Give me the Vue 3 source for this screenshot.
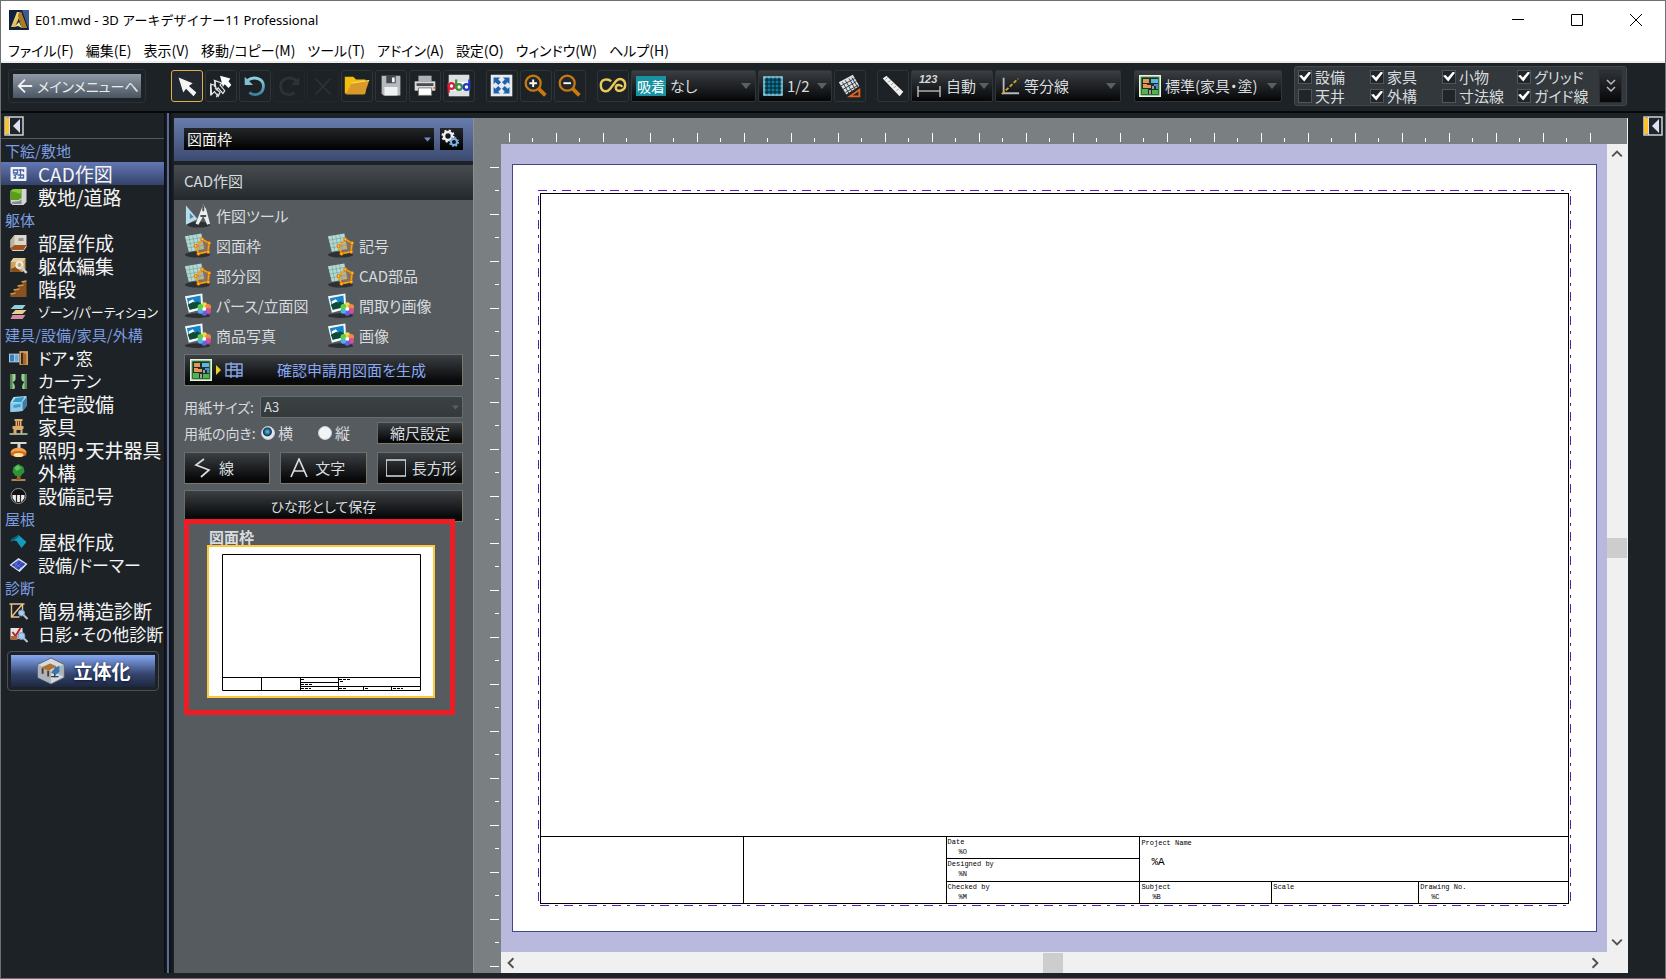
<script setup>
import { ref } from 'vue'

const menus = ['ファイル(F)', '編集(E)', '表示(V)', '移動/コピー(M)', 'ツール(T)', 'アドイン(A)', '設定(O)', 'ウィンドウ(W)', 'ヘルプ(H)']

const editTools = [
  { icon: 't-arrow', label: '選択', active: true },
  { icon: 't-multi', label: '複数選択' },
  { icon: 't-undo', label: '元に戻す' },
  { icon: 't-redo', label: 'やり直し', off: true },
  { icon: 't-delete', label: '削除', off: true },
  { icon: 't-open', label: '開く' },
  { icon: 't-save', label: '保存' },
  { icon: 't-print', label: '印刷' },
  { icon: 't-pbd', label: 'パース' }
]
const viewTools = [
  { icon: 't-fit', label: '全体表示' },
  { icon: 't-zoomin', label: '拡大' },
  { icon: 't-zoomout', label: '縮小' }
]

const layers = ref([
  { name: '設備', on: true }, { name: '家具', on: true }, { name: '小物', on: true }, { name: 'グリッド', on: true },
  { name: '天井', on: false }, { name: '外構', on: true }, { name: '寸法線', on: false }, { name: 'ガイド線', on: true }
])

const groups = [
  { title: '下絵/敷地', items: [['CAD作図', 's-cad'], ['敷地/道路', 's-land']] },
  { title: '躯体', items: [['部屋作成', 's-room'], ['躯体編集', 's-edit'], ['階段', 's-stairs'], ['ゾーン/パーティション', 's-zone', 'small']] },
  { title: '建具/設備/家具/外構', items: [['ドア・窓', 's-door', 'kana'], ['カーテン', 's-curtain', 'kana'], ['住宅設備', 's-bath'], ['家具', 's-chair'], ['照明・天井器具', 's-lamp'], ['外構', 's-tree'], ['設備記号', 's-symbol']] },
  { title: '屋根', items: [['屋根作成', 's-roof'], ['設備/ドーマー', 's-solar', 'kana']] },
  { title: '診断', items: [['簡易構造診断', 's-struct'], ['日影・その他診断', 's-sun', 'kana']] }
]
const current = ref('CAD作図')

const parts = [
  ['作図ツール', 'p-compass'], null,
  ['図面枠', 'p-shape'], ['記号', 'p-shape'],
  ['部分図', 'p-shape'], ['CAD部品', 'p-shape'],
  ['パース/立面図', 'p-image'], ['間取り画像', 'p-image'],
  ['商品写真', 'p-image'], ['画像', 'p-image']
]

const direction = ref('横')
const blockCells = [
  { area: 'a' }, { area: 'b' },
  { area: 'c', label: 'Date', value: '%O' },
  { area: 'd', label: 'Designed by', value: '%N' },
  { area: 'e', label: 'Checked by', value: '%M' },
  { area: 'f', label: 'Project Name', value: '%A', big: true },
  { area: 'g', label: 'Subject', value: '%B' },
  { area: 'h', label: 'Scale' },
  { area: 'i', label: 'Drawing No.', value: '%C' }
]
</script>

<template>
  <div class="window">
    <svg class="defs" aria-hidden="true">
      <defs>
        <linearGradient id="g-gold" x1="0" y1="0" x2="1" y2="1"><stop offset="0" stop-color="#fff0a0" /><stop offset="1" stop-color="#c98a10" /></linearGradient>
        <linearGradient id="g-cyan" x1="0" y1="0" x2="0" y2="1"><stop offset="0" stop-color="#8fd0e0" /><stop offset="1" stop-color="#3d7f9c" /></linearGradient>
      </defs>
      <symbol id="logo" viewBox="0 0 20 20">
        <rect width="20" height="20" fill="#10213f" /><path d="M13 0h7v20z" fill="#3f5c8c" />
        <path d="M8 2h4l6 16h-5L10 8 6 17H2z" fill="url(#g-gold)" /><path d="M10 2h2l6 16h-5L9 6z" fill="#a97c1c" /><path d="M5 17l5-5 3 6-4-2z" fill="#f6df8c" />
      </symbol>
      <symbol id="t-arrow" viewBox="0 0 32 32"><path d="M7 7l15 6-4 3 8 7-3 4-8-8-3 4z" fill="#f4f4f4" /></symbol>
      <symbol id="t-multi" viewBox="0 0 32 32">
        <g fill="#1c2024" stroke="#e4e4e4" stroke-width="1.3"><path d="M5 14l7 2-2 2 5 5-2 4-4-5-3 3z" /><path d="M9 10l8 3-2 2 5 6-2 3-5-6-2 2z" /></g>
        <path d="M15 5l11 3-2 3 3 4-3 3-4-4-2 3z" fill="#fff" /><path d="M5 15v11M10 11l-1 6M13 24l-2 4" stroke="#e4e4e4" stroke-width="1.4" fill="none" />
      </symbol>
      <symbol id="t-undo" viewBox="0 0 32 32"><path d="M8 10c7-5 17-2 17 6s-8 12-15 7" fill="none" stroke="url(#g-cyan)" stroke-width="3" /><path d="M5 6v9h9z" fill="#7cc0d4" /></symbol>
      <symbol id="t-redo" viewBox="0 0 32 32"><path d="M24 10c-7-5-17-2-17 6s8 12 15 7" fill="none" stroke="#2c3236" stroke-width="3" /><path d="M27 6v9h-9z" fill="#2c3236" /></symbol>
      <symbol id="t-delete" viewBox="0 0 32 32"><path d="M8 8l16 17M24 8L8 25" stroke="#2b3034" stroke-width="2" /></symbol>
      <symbol id="t-open" viewBox="0 0 32 32"><path d="M3 6h9l3 3h10v15H3z" fill="#f3bd0c" /><path d="M10 13l19-3-5 15H4z" fill="#d99a2a" /><path d="M10 13l19-3" stroke="#ffe07a" /></symbol>
      <symbol id="t-save" viewBox="0 0 32 32"><path d="M6 5h20v21H8l-2-2z" fill="#b6babf" /><path d="M11 5h10v8H11z" fill="#41474d" /><path d="M17 7h3v5h-3zM9 17h14v9H9z" fill="#eef0f2" /></symbol>
      <symbol id="t-print" viewBox="0 0 32 32"><path d="M9 5h14v6H9z" fill="#aeb2b6" /><path d="M5 11h22v10H5z" fill="#d9dadb" /><path d="M7 13h18v3H7z" fill="#4a4d50" /><path d="M9 18h14v8H9z" fill="#fff" stroke="#777" /><path d="M25 17h2v2h-2z" fill="#e66f29" /></symbol>
      <symbol id="t-pbd" viewBox="0 0 32 32">
        <rect x="5" y="4" width="22" height="23" fill="#dde0e3" /><rect x="5" y="12" width="22" height="9" fill="#fff" />
        <g fill="none" stroke-width="2.4"><circle cx="8" cy="16" r="3" stroke="#d4213a" /><path d="M5 13v10" stroke="#d4213a" /><circle cx="16" cy="17" r="3" stroke="#3a8f3c" /><path d="M13 9v10" stroke="#3a8f3c" /><circle cx="24" cy="17" r="3" stroke="#2438c0" /><path d="M27 9v10" stroke="#2438c0" /></g>
      </symbol>
      <symbol id="t-fit" viewBox="0 0 32 32"><rect x="4" y="4" width="23" height="23" fill="#e6ebf2" /><path d="M7 7h7l-2 2 3 3-3 3-3-3-2 2zM24 7h-7l2 2-3 3 3 3 3-3 2 2zM7 24h7l-2-2 3-3-3-3-3 3-2-2zM24 24h-7l2-2-3-3 3-3 3 3 2-2z" fill="#2262a8" /></symbol>
      <symbol id="t-zoomin" viewBox="0 0 32 32"><circle cx="13" cy="13" r="8" fill="#24282c" stroke="#c87a10" stroke-width="2.4" /><path d="M19 19l7 7" stroke="#c87a10" stroke-width="4" /><path d="M13 9v8M9 13h8" stroke="#fff" stroke-width="2" /></symbol>
      <symbol id="t-zoomout" viewBox="0 0 32 32"><circle cx="13" cy="13" r="8" fill="#24282c" stroke="#c87a10" stroke-width="2.4" /><path d="M19 19l7 7" stroke="#c87a10" stroke-width="4" /><path d="M9 13h8" stroke="#fff" stroke-width="2" /></symbol>
      <symbol id="t-loop" viewBox="0 0 32 32"><path d="M14 11C11 8 3 8 3 15c0 8 7 8 10 4l6-8c4-5 10-2 10 4 0 7-10 8-10 3 0-4 5-4 7-1" fill="none" stroke="#e8c95c" stroke-width="2.6" /></symbol>
      <symbol id="t-grid" viewBox="0 0 20 20"><rect width="20" height="20" fill="#0b7c9c" /><path d="M4 0v20M8 0v20M12 0v20M16 0v20M0 4h20M0 8h20M0 12h20M0 16h20" stroke="#0b1c24" /><rect x="1" y="1" width="18" height="18" fill="none" stroke="#d6f0f6" /></symbol>
      <symbol id="t-gridrot" viewBox="0 0 32 32"><path d="M4 12L19 4l7 12-14 9z" fill="#dde0e2" /><path d="M8 12l7 12M11 10l7 12M15 8l7 12M18 7l6 10M6 16l15-8M8 20l15-9M11 23l14-8" stroke="#30363a" stroke-width="1" /><path d="M26 20v7H16z" fill="none" stroke="#e0641c" stroke-width="2" /></symbol>
      <symbol id="t-ruler" viewBox="0 0 32 32"><path d="M5 8l4-3 18 17-4 5z" fill="#eeeeec" /><path d="M10 7l-2 2M13 10l-2 2M16 13l-2 2M19 16l-2 2M22 19l-2 2" stroke="#888" /></symbol>
      <symbol id="t-divide" viewBox="0 0 20 22"><path d="M3 2v17h17" fill="none" stroke="#b5b9bc" stroke-width="2" /><path d="M1 20L19 3" stroke="#d6a92c" stroke-width="2" stroke-dasharray="4 2" /></symbol>
      <symbol id="t-plan" viewBox="0 0 22 22"><rect width="22" height="22" fill="#eaf3e6" /><rect x="2" y="2" width="18" height="18" fill="#1c3224" stroke="#4aa653" /><path d="M4 4h6v4H4zM4 9h4v4H4zM8 10h4v3H8z" fill="#eb935c" /><path d="M12 4h7v4h-7z" fill="#61b3e8" /><path d="M15 9h4v5h-2v-3h-2z" fill="#4a8ed0" /><path d="M3 14h6v5H3zM13 15h6v4h-6z" fill="#57b050" /><path d="M13 11h2v3h-2zM10 15h2v4h-2z" fill="#98a0a0" /></symbol>
      <symbol id="t-grids" viewBox="0 0 18 18"><path d="M1 3h16v12H1zM1 9h16M6 1v16M12 3v14M6 6h6M12 12h5" fill="none" stroke="#8aaaf0" stroke-width="1.3" /></symbol>
      <symbol id="collapse" viewBox="0 0 20 20"><rect x="1" y="1" width="18" height="18" fill="#20252b" stroke="#dadfe0" stroke-width="1.4" /><rect x="1" y="2" width="4" height="16" fill="#fcc42c" /><path d="M5.500 1v18" stroke="#dadfe0" /><path d="M16 3v14l-7-7z" fill="#e0e0f4" /></symbol>
      <symbol id="down" viewBox="0 0 10 6"><path d="M0 0h10L5 6z" fill="currentColor" /></symbol>
      <symbol id="s-cad" viewBox="0 0 18 18"><rect x="1" y="2" width="16" height="14" rx="1" fill="#f2f4fa" /><path d="M4 5h4v3H4zM4 10h2v3H4M9 5h5v2M11 4v9M8 10h6v3H9M7 8v2" fill="none" stroke="#4b68a8" stroke-width="1.3" /></symbol>
      <symbol id="s-land" viewBox="0 0 18 18"><path d="M1 3l3-2h13v13l-3 3H3l-2-2z" fill="#d2d5d3" /><path d="M1 3l3-2h8v9l-3 2H1z" fill="#5a9c1c" /><path d="M1 3l3-2h8v5z" fill="#83c43a" /><path d="M2 14l8-1 2-2v5H3z" fill="#868a88" /></symbol>
      <symbol id="s-room" viewBox="0 0 18 18"><path d="M1 6l4-5h12v12l-3 4H3l-2-3z" fill="#dfd8c8" /><path d="M1 6l4-5v10l-4 3z" fill="#bcb4a2" /><path d="M9 4h5v3H9z" fill="#8d98a0" /><path d="M1 14l4-3h12l-3 5H3z" fill="#a0541c" /></symbol>
      <symbol id="s-edit" viewBox="0 0 18 18"><path d="M1 5l3-4h12v11l-3 3H1z" fill="#c9a35e" /><path d="M1 5l3-4h12l-3 4z" fill="#e8cf98" /><path d="M1 12l5-2 6 5H2z" fill="#8c4d1a" /><circle cx="10" cy="8" r="3" fill="none" stroke="#e8e8e8" stroke-width="2.200" /><path d="M12 10l5 6" stroke="#d0d0d0" stroke-width="2.600" /></symbol>
      <symbol id="s-stairs" viewBox="0 0 18 18"><path d="M1 17v-3h4v-4h4V6h4V2h4v15z" fill="#8a5220" /><path d="M1 14l5-1M4 10l6-1M8 6l6-1M12 2l5-1" stroke="#d39a4c" stroke-width="1.600" /></symbol>
      <symbol id="s-zone" viewBox="0 0 18 18"><path d="M5 2h11l-3 4H1z" fill="#8ed0dc" /><path d="M6 7h11l-4 4H2z" fill="#e8d08c" /><path d="M3 12h13l-3 4H1z" fill="#d48ca4" /></symbol>
      <symbol id="s-door" viewBox="0 0 22 18"><path d="M0 4h12v10H0z" fill="#bed7ea" /><path d="M1 5h5v8H1z" fill="#3a7fb8" /><path d="M7 5h4v8H7z" fill="#6ba8d4" /><path d="M12 1h10v16H12z" fill="#d69d5c" /><path d="M14 3h3v13h-3z" fill="#1f2326" /><path d="M16 3l4 1v12l-4 1z" fill="#a8672c" /></symbol>
      <symbol id="s-curtain" viewBox="0 0 18 18"><path d="M1 2h5c0 5 1 7-3 8 2 2 3 4 2 7H1z" fill="#9ccf94" /><path d="M17 2h-5c0 5-1 7 3 8-2 2-3 4-2 7h4z" fill="#9ccf94" /><path d="M1 2h2v15H1zM15 2h2v15h-2z" fill="#528a50" /></symbol>
      <symbol id="s-bath" viewBox="0 0 18 18"><path d="M1 7l3-5 13-1v10l-4 5-12 1z" fill="#b8dcee" /><path d="M3 7l3-4 9-1-3 5z" fill="#2c9cc8" /><path d="M1 8l12-1v9L1 17z" fill="#8fcbe8" /><path d="M4 10l7-1v3l-7 1z" fill="#3e9cd0" /><path d="M13 7l4-5v9l-4 5z" fill="#3c7ca8" /></symbol>
      <symbol id="s-chair" viewBox="0 0 18 18"><path d="M0 15h18v2H0z" fill="#90a890" /><path d="M5 1h8v2h-1v5h2v3h-1v5h-2v-4H7v4H4v-5H3V8h3V3H5z" fill="#deac6a" /><path d="M8 3v5M10 3v5" stroke="#7a4c1c" /></symbol>
      <symbol id="s-lamp" viewBox="0 0 18 18"><path d="M1 1h16v2h-6v4H8V3H1z" fill="#d8d8d0" /><path d="M1 12c0-7 16-7 16 0z" fill="#f0a24c" /><ellipse cx="9" cy="13" rx="8" ry="3" fill="#d8671c" /><ellipse cx="9" cy="14" rx="5" ry="2" fill="#ffe694" /></symbol>
      <symbol id="s-tree" viewBox="0 0 18 18"><path d="M2 15h14v2H2z" fill="#b08452" /><path d="M8 9h3v7H7z" fill="#94632c" /><path d="M9 0l5 3 1 5-4 4H6L3 8l1-5z" fill="#2c9436" /><path d="M8 1l4 3-5 3-2-3z" fill="#64c25a" /></symbol>
      <symbol id="s-symbol" viewBox="0 0 18 18"><circle cx="9" cy="9" r="7.500" fill="#111" stroke="#8f9395" /><path d="M3 8h12v3l-3 4H6l-3-4z" fill="#eee" /><path d="M7 8v7M11 8v7" stroke="#222" stroke-width="1.200" /></symbol>
      <symbol id="s-roof" viewBox="0 0 18 18"><path d="M1 7l8-5 8 7-5 6-5-7z" fill="#149cba" /><path d="M1 7l8-5v2L2 9z" fill="#0b647c" /></symbol>
      <symbol id="s-solar" viewBox="0 0 18 18"><path d="M0 9l9-7 9 6-8 8z" fill="#d8e0f4" /><path d="M2 9l7-5 7 4-7 6z" fill="#3448b8" /><path d="M5 7l7 5M9 4l-4 7M13 6l-7 6" stroke="#7c90e4" stroke-width=".6" /></symbol>
      <symbol id="s-struct" viewBox="0 0 18 18"><path d="M2 2v13h8M2 2h11v6M13 2L2 15M0 2h15" fill="none" stroke="#e8c48a" stroke-width="1.400" /><circle cx="12" cy="11" r="3" fill="#a8ccf0" stroke="#6c98c8" /><path d="M14 13l4 4" stroke="#b8c0c8" stroke-width="2" /></symbol>
      <symbol id="s-sun" viewBox="0 0 18 18"><path d="M1 3h12v11H1z" fill="#e8e4e2" /><path d="M3 7l3 4 5-8" fill="none" stroke="#b82430" stroke-width="2" /><path d="M1 11h7v4H1z" fill="#a86840" /><circle cx="12" cy="11" r="3.500" fill="#a8ccf0" stroke="#6c98c8" /><path d="M14 13l4 4" stroke="#b8c0c8" stroke-width="2" /></symbol>
      <symbol id="cube" viewBox="0 0 32 30"><path d="M16 1l14 7v14l-14 7-14-7V8z" fill="#d4dadf" stroke="#5c646c" /><path d="M16 28V15L2 8v14zM16 15l13-7v13z" fill="#aab4bc" /><path d="M6 11l9-4 7 3-9 5z" fill="#ad7234" /><path d="M7 12v6M13 15v6M21 11v5" stroke="#5c3410" stroke-width="2" /><path d="M20 12l5-3v7l-4 3-5-2z" fill="#3c74ac" /><path d="M20 18v4M16 21h8" stroke="#2c4458" stroke-width="1.500" /></symbol>
      <symbol id="p-compass" viewBox="0 0 28 26"><ellipse cx="15" cy="22" rx="12" ry="3" fill="#2c3033" /><path d="M2 2v20l12-6z" fill="#b7dcf0" /><path d="M6 10v6l4-2z" fill="#4e86a4" /><path d="M20 1l3 5 4 15-3 1-4-9-5 9-3-1 6-15z" fill="#eceeee" /><path d="M20 2v6M17 13h6" stroke="#4c4f52" stroke-width="2" /></symbol>
      <symbol id="p-shape" viewBox="0 0 28 26"><ellipse cx="14" cy="22" rx="13" ry="3" fill="#2c3033" /><path d="M1 3l17-3 3 16-16 3z" fill="#b4dad4" /><path d="M5 2l3 16M9 2l3 16M13 1l3 16M2 7l17-3M3 11l17-3M4 15l17-3" stroke="#6d9c9c" stroke-width=".6" /><path d="M12 13l7-7 7 4-1 9-10 2z" fill="#b58a56" fill-opacity=".5" stroke="#f5a40c" stroke-width="1.800" /><g fill="#ffd000" stroke="#e8681c"><circle cx="12" cy="13" r="1.600" /><circle cx="19" cy="6" r="1.600" /><circle cx="26" cy="10" r="1.600" /><circle cx="25" cy="19" r="1.600" /><circle cx="15" cy="21" r="1.600" /></g></symbol>
      <symbol id="p-image" viewBox="0 0 28 26"><ellipse cx="14" cy="23" rx="13" ry="2.500" fill="#2c3033" /><path d="M1 3l18-3 1 16-15 4z" fill="#f4f7f8" /><path d="M3 5l14-3 1 12-12 3z" fill="#1684c8" /><path d="M4 12l4-5 3 3 3-2 4 3v3L6 17z" fill="#104c34" /><path d="M5 8l4-2 2 2-6 3z" fill="#fff" /><g><circle cx="21" cy="12" r="3" fill="#f0d848" /><circle cx="25" cy="14" r="3" fill="#ec8c40" /><circle cx="25" cy="18" r="3" fill="#d84c9c" /><circle cx="21" cy="20" r="3" fill="#6c5ce0" /><circle cx="17" cy="18" r="3" fill="#48b4e8" /><circle cx="17" cy="14" r="3" fill="#60cc50" /><circle cx="21" cy="16" r="2" fill="#fff" /></g></symbol>
      <symbol id="gear" viewBox="0 0 22 22"><circle cx="8" cy="8" r="4" fill="none" stroke="#f0f0f0" stroke-width="2.600" /><circle cx="8" cy="8" r="5.600" fill="none" stroke="#f0f0f0" stroke-width="2" stroke-dasharray="2.200 2.200" /><circle cx="14" cy="14" r="3" fill="#101418" stroke="#7cb0e0" stroke-width="2" /><circle cx="14" cy="14" r="4.300" fill="none" stroke="#7cb0e0" stroke-width="1.500" stroke-dasharray="1.700 1.700" /></symbol>
    </svg>

    <header class="titlebar">
      <svg class="logo"><use href="#logo" /></svg>
      <h1>E01.mwd - 3D アーキデザイナー11 Professional</h1>
      <div class="winbtns">
        <button aria-label="最小化"><svg viewBox="0 0 12 12"><path d="M0 5.500h12" /></svg></button>
        <button aria-label="最大化"><svg viewBox="0 0 12 12"><path d="M.5.5h11v11H.5z" /></svg></button>
        <button aria-label="閉じる"><svg viewBox="0 0 12 12"><path d="M0 0l12 12M12 0L0 12" /></svg></button>
      </div>
    </header>

    <nav class="menubar">
      <button v-for="m in menus" :key="m">{{ m }}</button>
    </nav>

    <div class="toolbar">
      <button class="back"><span><svg viewBox="0 0 20 18"><path d="M18 9H3M10 2L3 9l7 7" /></svg>メインメニューへ</span></button>
      <div class="group">
        <button v-for="t in editTools" :key="t.icon" class="tool" :class="{ active: t.active, off: t.off }" :aria-label="t.label"><svg><use :href="'#' + t.icon" /></svg></button>
      </div>
      <div class="group">
        <button v-for="t in viewTools" :key="t.icon" class="tool" :aria-label="t.label"><svg><use :href="'#' + t.icon" /></svg></button>
      </div>
      <div class="group">
        <button class="tool" aria-label="連続"><svg><use href="#t-loop" /></svg></button>
        <label class="drop snap"><b>吸着</b><select><option>なし</option></select><svg class="tri"><use href="#down" /></svg></label>
        <label class="drop frac"><svg class="i20"><use href="#t-grid" /></svg><select aria-label="グリッド分割"><option>1/2</option></select><svg class="tri"><use href="#down" /></svg></label>
        <button class="tool" aria-label="グリッド回転"><svg><use href="#t-gridrot" /></svg></button>
      </div>
      <div class="group">
        <button class="tool" aria-label="計測"><svg><use href="#t-ruler" /></svg></button>
        <label class="drop dim">
          <svg class="i24" viewBox="0 0 26 24"><path d="M2 12v11M24 12v11M2 17h22" stroke="#a9adb1" stroke-width="1.6" fill="none" /><text x="3" y="9" font-family="Liberation Sans" font-size="11" font-weight="700" font-style="italic" fill="#d5d8da">123</text></svg>
          <select aria-label="寸法"><option>自動</option></select><svg class="tri"><use href="#down" /></svg>
        </label>
        <label class="drop divide"><svg class="i20"><use href="#t-divide" /></svg><select aria-label="補助線"><option>等分線</option></select><svg class="tri"><use href="#down" /></svg></label>
      </div>
      <label class="drop style"><svg class="i22"><use href="#t-plan" /></svg><select aria-label="表示スタイル"><option>標準(家具・塗)</option></select><svg class="tri"><use href="#down" /></svg></label>
      <div class="layers">
        <div class="checks">
          <label v-for="l in layers" :key="l.name"><input v-model="l.on" type="checkbox">{{ l.name }}</label>
        </div>
        <button class="more" aria-label="その他"><svg viewBox="0 0 10 14"><path d="M1 1l4 4 4-4M1 8l4 4 4-4" /></svg></button>
      </div>
    </div>

    <div class="body">
      <aside class="sidebar">
        <div class="foldrow"><button class="fold" aria-label="たたむ"><svg><use href="#collapse" /></svg></button></div>
        <section v-for="g in groups" :key="g.title">
          <h2>{{ g.title }}</h2>
          <button v-for="[name, icon, size] in g.items" :key="name" class="nav" :class="[size, { on: current === name }]" @click="current = name"><svg><use :href="'#' + icon" /></svg>{{ name }}</button>
        </section>
        <button class="build"><span><svg><use href="#cube" /></svg>立体化</span></button>
      </aside>
      <div class="divider"></div>

      <section class="panel">
        <div class="panelhead">
          <label class="drop frame"><select aria-label="部品種別"><option>図面枠</option></select><svg class="tri"><use href="#down" /></svg></label>
          <button class="gear" aria-label="設定"><svg><use href="#gear" /></svg></button>
        </div>
        <h2 class="paneltitle">CAD作図</h2>
        <div class="panelbody">
          <div class="parts">
            <template v-for="(p, i) in parts" :key="i">
              <button v-if="p"><svg><use :href="'#' + p[1]" /></svg>{{ p[0] }}</button>
              <span v-else></span>
            </template>
          </div>
          <button class="btn gen"><svg class="i22"><use href="#t-plan" /></svg><i></i><svg class="i18"><use href="#t-grids" /></svg><span>確認申請用図面を生成</span></button>
          <div class="row size">
            <label for="paper">用紙サイズ:</label>
            <div class="drop paper"><select id="paper"><option>A3</option></select><svg class="tri"><use href="#down" /></svg></div>
          </div>
          <div class="row dir">
            <span>用紙の向き:</span>
            <label><input v-model="direction" type="radio" name="dir" value="横">横</label>
            <label><input v-model="direction" type="radio" name="dir" value="縦">縦</label>
            <button class="btn">縮尺設定</button>
          </div>
          <div class="shapes">
            <button class="btn"><svg viewBox="0 0 20 20"><path d="M11 1L3 7l13 5-8 7" /></svg><span>線</span></button>
            <button class="btn"><svg viewBox="0 0 20 20"><path d="M2 19l8-18 8 18M5 13h10" /></svg><span>文字</span></button>
            <button class="btn"><svg viewBox="0 0 20 20"><path d="M0 2h20v16H0z" /></svg><span>長方形</span></button>
          </div>
          <button class="btn save">ひな形として保存</button>
          <div class="picked">
            <h3>図面枠</h3>
            <div class="thumb">
              <svg viewBox="0 0 224 149">
                <g fill="none" stroke="#000"><path d="M13.500 7.500h198v136h-198zM13.500 130.500h198M52.500 130.500v13M91.500 130.500v13M129.500 130.500v13M91.500 135.500h38M91.500 139.500h120M154.500 139.500v4M182.500 139.500v4" /><path d="M92 132.500h4M92 137.500h11M92 141.500h10M130 132.500h12M131 134.500h3M130 141.500h7M156 141.500h4M184 141.500h10" stroke-dasharray="3 1" /></g>
              </svg>
            </div>
          </div>
        </div>
      </section>

      <main class="canvas">
        <div class="ruler top"></div>
        <div class="ruler left"></div>
        <div class="desk">
          <div class="page">
            <div class="margin">
              <div class="sheet">
                <div class="block">
                  <div v-for="c in blockCells" :key="c.area" :class="['cell', c.area, { big: c.big }]"><span>{{ c.label }}</span><em>{{ c.value }}</em></div>
                </div>
              </div>
            </div>
          </div>
        </div>
        <div class="scroll v">
          <svg viewBox="0 0 10 10"><path d="M1 7l4-4 4 4" /></svg><i></i><svg viewBox="0 0 10 10"><path d="M1 3l4 4 4-4" /></svg>
        </div>
        <div class="scroll h">
          <svg viewBox="0 0 10 10"><path d="M7 1L3 5l4 4" /></svg><i></i><svg viewBox="0 0 10 10"><path d="M3 1l4 4-4 4" /></svg>
        </div>
      </main>
      <aside class="rightbar"><button class="fold" aria-label="開く"><svg><use href="#collapse" /></svg></button></aside>
    </div>
  </div>
</template>

<style>
html, body { margin: 0; background: #1d2226; }
</style>

<style scoped>
.window {
  display: flex; flex-direction: column; box-sizing: border-box; height: 100vh; min-height: 800px;
  border: 1px solid #6e6f71; background: #1d2226; overflow: hidden;
  font: 15px/20px "Noto Sans CJK JP", "Noto Sans", sans-serif; font-feature-settings: "palt"; color: #d8dcdf;
}
.window * { box-sizing: border-box; }
.defs { position: absolute; width: 0; height: 0; }
button, select { margin: 0; padding: 0; border: 0; background: none; color: inherit; font: inherit; font-feature-settings: inherit; text-align: left; white-space: nowrap; }
svg { display: block; flex: none; }
h1, h2, h3 { margin: 0; font-weight: 400; }

.titlebar { display: flex; align-items: center; height: 38px; flex: none; padding-left: 8px; background: #fff; color: #000; }
.logo { width: 20px; height: 20px; }
.titlebar h1 { flex: 1; margin-left: 6px; font: 13px/20px "Noto Sans", "Noto Sans CJK JP", sans-serif; }
.winbtns { display: flex; }
.winbtns button { display: grid; place-items: center; width: 59px; height: 36px; }
.winbtns svg { width: 12px; height: 12px; fill: none; stroke: #000; }
.menubar { display: flex; gap: 12px; height: 24px; flex: none; padding-left: 7px; border-bottom: 2px solid #ececee; background: #fff; color: #000; font-size: 14px; }

.toolbar { display: flex; align-items: center; gap: 11px; height: 50px; flex: none; padding: 0 38px 2px 7px; border-bottom: 2px solid #070809; }
.back { width: 138px; height: 34px; padding: 4px; border: 1px solid #2c3135; border-radius: 4px; margin-right: 14px; }
.back span { display: flex; align-items: center; gap: 3px; height: 24px; padding-left: 3px; background: linear-gradient(#909aa6, #4a5562); color: #e8ebee; font-size: 14px; }
.back svg { width: 18px; height: 18px; fill: none; stroke: #f0f2f4; stroke-width: 2; }
.group { display: flex; gap: 2px; }
.tool { width: 32px; height: 32px; border: 1px solid #2f3438; border-radius: 3px; }
.tool svg { width: 30px; height: 30px; }
.tool.active { border: 1px solid #e0b040; background: #23272f; }
.tool.off { border-color: #22272b; }
.drop { display: flex; align-items: center; height: 32px; padding: 0 4px; border: 1px solid #303539; border-radius: 2px; background: linear-gradient(#3a3e42, #050607); }
.drop select { flex: 1; min-width: 0; appearance: none; outline: 0; }
.tri { width: 10px; height: 6px; color: #5a5f64; }
.snap { width: 125px; }
.snap b { padding: 0 1px; margin-right: 4px; background: #1793a3; color: #fff; font-size: 14px; font-weight: 400; line-height: 20px; }
.i18 { width: 18px; height: 18px; }
.i20 { width: 20px; height: 20px; margin-right: 4px; }
.i22 { width: 22px; height: 22px; margin-right: 4px; }
.i24 { width: 26px; height: 24px; margin-right: 4px; }
.frac { width: 74px; }
.dim { width: 82px; padding-right: 3px; }
.divide { width: 126px; }
.style { width: 148px; margin-left: 2px; }
.layers { display: flex; align-items: center; justify-content: space-between; flex: none; width: 333px; height: 40px; margin-left: auto; padding: 0 4px 0 3px; border: 1px solid #43484c; border-radius: 3px; background: #33383c; }
.checks { display: grid; grid-template-columns: 72px 72px 75px 70px; grid-auto-rows: 19px; }
.checks label { display: flex; align-items: center; gap: 3px; white-space: nowrap; line-height: 19px; }
.checks input { appearance: none; display: grid; place-items: center; width: 14px; height: 14px; margin: 0; border: 1px solid #50565b; background: #202529; }
.checks input:checked::before { content: ""; width: 12px; height: 10px; background: #fff; clip-path: polygon(0 42%, 22% 36%, 40% 60%, 84% 0, 100% 12%, 44% 100%); }
.more { display: grid; place-items: center; width: 23px; height: 33px; border: 1px solid #2a2e32; background: linear-gradient(#2e3236, #060708); }
.more svg { width: 10px; height: 14px; fill: none; stroke: #b8bcc0; stroke-width: 1.5; }

.body { display: flex; flex: 1; min-height: 0; padding-bottom: 5px; }
.sidebar { flex: none; width: 163px; }
.foldrow { padding: 3px 0 2px 3px; border-bottom: 1px solid #53575b; }
.fold { display: block; }
.fold svg { width: 20px; height: 20px; }
.sidebar h2 { height: 23px; padding-left: 4px; color: #7c9de0; font-size: 15px; line-height: 23px; white-space: nowrap; }
.nav { display: flex; align-items: center; gap: 10px; width: 100%; height: 23px; padding-left: 8px; color: #f4f4f4; font-size: 19px; line-height: 23px; }
.nav.kana { font-size: 17px; }
.nav.small { font-size: 13px; }
.nav svg { width: 19px; height: 18px; }
.nav.on { background: linear-gradient(#6377b4, #34436a); }
.build { display: block; width: 152px; height: 40px; margin: 6px 0 0 6px; padding: 3px; border: 1px solid #4a4f54; border-radius: 4px; }
.build span { display: flex; align-items: center; justify-content: center; gap: 6px; height: 100%; background: linear-gradient(#86a8f4, #34446c 60%, #1d2740); color: #fff; font-size: 19px; font-weight: 700; text-shadow: 0 1px 3px #0c1840; }
.build svg { width: 32px; height: 28px; }
.divider { flex: none; width: 10px; background: linear-gradient(90deg, #0b0d10, #1a1f26 3px, #5a6b94 3px, #5a6b94 5px, #0d1116 5px, #1d2226); }

.panel { display: flex; flex-direction: column; flex: none; width: 299px; margin-top: 5px; }
.panelhead { display: flex; gap: 6px; height: 43px; padding: 10px 10px 11px; background: linear-gradient(#687dac, #3c4a70); }
.frame { flex: 1; height: 22px; padding: 0 3px; border: 0; border-radius: 0; background: linear-gradient(#24272a, #000); color: #f4f4f4; }
.frame .tri { width: 7px; height: 5px; color: #6f90cc; }
.gear { width: 23px; height: 22px; background: linear-gradient(#24272a, #000); }
.gear svg { width: 22px; height: 22px; }
.paneltitle { height: 35px; margin-top: 4px; padding-left: 10px; background: linear-gradient(#474c50, #23282c); font-size: 15px; line-height: 32px; }
.panelbody { flex: 1; padding: 1px 10px 0 10px; background: #565b5f; }
.parts { display: grid; grid-template-columns: 143px 1fr; grid-auto-rows: 30px; }
.parts button { display: flex; align-items: center; gap: 5px; }
.parts svg { width: 27px; height: 26px; }
.btn { border: 1px solid; border-color: #686d70 #7c7868 #7c7868 #686d70; background: linear-gradient(#3c4043, #08090a 85%); text-align: center; }
.gen { display: flex; align-items: center; width: 100%; height: 32px; margin-top: 3px; padding-left: 5px; color: #88a8f4; }
.gen i { border: 5px solid transparent; border-left: 5px solid #f0d020; border-right: 0; margin-right: 4px; }
.gen span { flex: 1; padding-right: 2px; }
.row { display: flex; align-items: center; }
.size { height: 22px; margin-top: 10px; }
.size label, .dir > span { width: 76px; white-space: nowrap; font-size: 14px; }
.paper { flex: 1; height: 22px; padding: 0 3px; border-color: #676c70; background: linear-gradient(#3c4145, #34393c); font-size: 13px; }
.paper .tri { width: 7px; height: 5px; }
.dir { height: 22px; margin-top: 4px; white-space: nowrap; }
.dir label { display: flex; align-items: center; gap: 3px; width: 57px; }
.dir input { appearance: none; width: 14px; height: 14px; margin: 0 0 0 1px; border: 1px solid #c8ced2; border-radius: 50%; background: #f2f5f7; }
.dir input:checked { background: radial-gradient(circle at 45% 40%, #6cc4ec 0, #0c3858 4px, #dfe9ee 5px); }
.dir .btn { width: 86px; height: 22px; margin-left: auto; line-height: 20px; }
.shapes { display: grid; grid-template-columns: repeat(3, 1fr); gap: 10px; margin-top: 8px; }
.shapes .btn { display: flex; align-items: center; gap: 6px; height: 32px; padding-left: 8px; }
.shapes svg { width: 20px; height: 20px; fill: none; stroke: #d8dcdf; stroke-width: 1.7; }
.save { display: block; width: 100%; height: 32px; margin-top: 6px; font-size: 14px; }
.picked { position: relative; width: 271px; margin-top: -3px; padding: 4px 15px 12px 18px; border: 5px solid #ee1c24; }
.picked h3 { padding-left: 2px; font-size: 15px; line-height: 17px; font-weight: 700; }
.thumb { width: 228px; border: 2px solid #ffc83b; background: #fff; }
.thumb svg { width: 100%; }

.canvas { display: grid; flex: 1; min-width: 0; grid-template: 26px 1fr 21px / 27px 1fr 20px; margin-top: 5px; background: #7a7f82; border-left: 1px solid #8b8f92; border-right: 1px solid #f0f0f0; }
.ruler.top { grid-area: 1 / 2 / 2 / 4; background: repeating-linear-gradient(90deg, transparent 0 8px, #fff 8px 9px, transparent 9px 47px) 0 15px / 100% 9px no-repeat, repeating-linear-gradient(90deg, transparent 0 31px, #fff 31px 32px, transparent 32px 47px) 0 20px / calc(100% - 21px) 4px no-repeat; }
.ruler.left { grid-area: 2 / 1 / 4 / 2; background: repeating-linear-gradient(transparent 0 23px, #fff 23px 24px, transparent 24px 47px) 16px 0 / 9px 100% no-repeat, repeating-linear-gradient(transparent 0 46px, #fff 46px 47px) 21px 0 / 4px calc(100% - 10px) no-repeat; }
.desk { grid-area: 2 / 2; display: flex; padding: 20px 10px 20px 11px; background: #b9b9de; }
.page { display: flex; flex: 1; padding: 25px; border: 1px solid #45458f; background: #fff; }
.margin {
  --dash: #5a1fb4 0 9px, transparent 9px 15px, #5a1fb4 15px 18px, transparent 18px 24px;
  display: flex; flex: 1; padding: 3px 2px 2px;
  background:
    repeating-linear-gradient(90deg, var(--dash)) 0 0 / 100% 1px no-repeat,
    repeating-linear-gradient(90deg, var(--dash)) 2px 100% / 100% 1px no-repeat,
    repeating-linear-gradient(var(--dash)) 0 6px / 1px 100% no-repeat,
    repeating-linear-gradient(var(--dash)) 100% 6px / 1px 100% no-repeat;
}
.sheet { display: flex; flex: 1; flex-direction: column; justify-content: flex-end; border: 1px solid #000; }
.block { display: grid; grid-template-columns: 202fr 203fr 194fr 132fr 147fr 150fr; grid-template-rows: 22px 23px 22px; grid-template-areas: "a b c f f f" "a b d f f f" "a b e g h i"; }
.cell { display: flex; flex-direction: column; border-top: 1px solid #000; border-left: 1px solid #000; padding: 0 1px; color: #000; font: 7px/10px "Liberation Mono", monospace; }
.cell em { padding-left: 11px; font-style: normal; }
.big { padding-top: 1px; }
.big em { padding: 5px 0 0 10px; font-size: 11px; line-height: 18px; }
.a { grid-area: a; border-left: 0; } .b { grid-area: b; } .c { grid-area: c; } .d { grid-area: d; } .e { grid-area: e; }
.f { grid-area: f; } .g { grid-area: g; } .h { grid-area: h; } .i { grid-area: i; }
.scroll { display: flex; align-items: center; justify-content: space-between; background: #f0f0f0; }
.scroll svg { width: 12px; height: 12px; fill: none; stroke: #505050; stroke-width: 1.6; }
.scroll i { width: 20px; height: 20px; background: #cdcdcd; }
.scroll.v { grid-area: 2 / 3; flex-direction: column; padding: 4px 0; }
.scroll.h { grid-area: 3 / 2 / 4 / 4; padding: 0 26px 0 4px; }
.rightbar { flex: none; width: 37px; padding: 3px 0 0 15px; }
</style>
